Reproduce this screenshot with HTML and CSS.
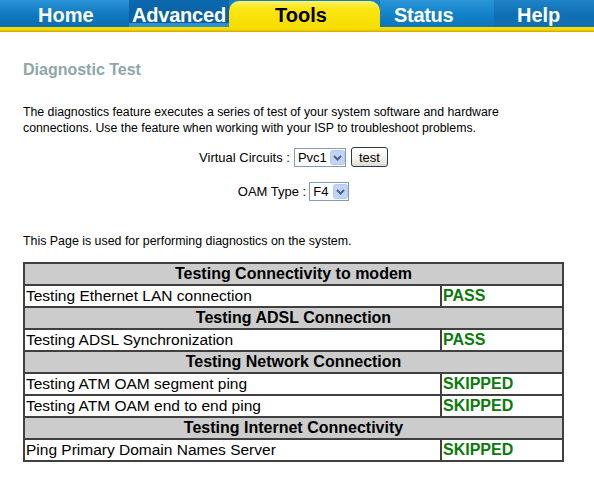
FILE: index.html
```html
<!DOCTYPE html>
<html>
<head>
<meta charset="utf-8">
<title>Diagnostic Test</title>
<link rel="stylesheet" href="styles.css">
</head>
<body>
<div class="nav">
  <div class="tabs">
    <a class="tab home">Home</a>
    <a class="tab adv">Advanced</a>
    <a class="tab tools">Tools</a>
    <a class="tab status">Status</a>
    <a class="tab help">Help</a>
  </div>
  <div class="strip"></div>
</div>
<div class="content">
  <h1 class="title">Diagnostic Test</h1>
  <p class="intro">The diagnostics feature executes a series of test of your system software and hardware connections. Use the feature when working with your ISP to troubleshoot problems.</p>
  <div class="form-row">
    <label class="lbl">Virtual Circuits :</label>
    <span class="select vc">
      <select><option>Pvc1</option></select>
      <svg class="arrow" viewBox="0 0 15 15" width="15" height="15"><rect x="0.5" y="0.5" width="14" height="14" rx="2" fill="#c1d3fb" stroke="#b5c8f2"/><path d="M4 6 L7.5 9.5 L11 6" fill="none" stroke="#4d6185" stroke-width="2"/></svg>
    </span>
    <button class="btn">test</button>
  </div>
  <div class="form-row oam">
    <label class="lbl">OAM Type :</label>
    <span class="select ft">
      <select><option>F4</option></select>
      <svg class="arrow" viewBox="0 0 15 15" width="15" height="15"><rect x="0.5" y="0.5" width="14" height="14" rx="2" fill="#c1d3fb" stroke="#b5c8f2"/><path d="M4 6 L7.5 9.5 L11 6" fill="none" stroke="#4d6185" stroke-width="2"/></svg>
    </span>
  </div>
  <p class="note">This Page is used for performing diagnostics on the system.</p>
  <table class="diag">
    <colgroup><col class="c1"><col class="c2"></colgroup>
    <tr><th colspan="2">Testing Connectivity to modem</th></tr>
    <tr><td>Testing Ethernet LAN connection</td><td class="res">PASS</td></tr>
    <tr><th colspan="2">Testing ADSL Connection</th></tr>
    <tr><td>Testing ADSL Synchronization</td><td class="res">PASS</td></tr>
    <tr><th colspan="2">Testing Network Connection</th></tr>
    <tr><td>Testing ATM OAM segment ping</td><td class="res">SKIPPED</td></tr>
    <tr><td>Testing ATM OAM end to end ping</td><td class="res">SKIPPED</td></tr>
    <tr><th colspan="2">Testing Internet Connectivity</th></tr>
    <tr><td>Ping Primary Domain Names Server</td><td class="res">SKIPPED</td></tr>
  </table>
</div>
</body>
</html>
```
FILE: styles.css
```css
html, body {
  margin: 0;
  padding: 0;
  background: #ffffff;
  font-family: "Liberation Sans", Arial, sans-serif;
  color: #000;
}

.nav {
  display: flex;
  flex-direction: column;
  width: 594px;
}
.tabs {
  display: flex;
  height: 27px;
  background: #1580c6;
}
.tab {
  display: block;
  height: 27px;
  box-sizing: border-box;
  font-family: "Liberation Sans", Arial, sans-serif;
  font-weight: bold;
  font-size: 20px;
  line-height: 30px;
  color: #ffffff;
  white-space: nowrap;
  text-decoration: none;
}
.home {
  width: 129px;
  padding-left: 38px;
  background: linear-gradient(#2a94d6, #0f78bf 55%, #0b6fb4);
}
.adv {
  width: 100px;
  padding-left: 3px;
  background: linear-gradient(#0b68ad, #0a5e9f 85%, #2e8fd0 86%);
  letter-spacing: -0.2px;
}
.tools {
  width: 151px;
  padding-left: 46px;
  color: #000;
  background: linear-gradient(#fff36a, #fbe612 30%, #f6de00);
  border-radius: 10px 10px 0 0;
  margin-top: 1px;
  height: 26px;
  line-height: 29px;
}
.status {
  width: 114px;
  padding-left: 14px;
  background: linear-gradient(#2b96d8, #1181c8 55%, #0c76bd);
  letter-spacing: -0.3px;
}
.help {
  width: 100px;
  padding-left: 23px;
  background: linear-gradient(#1e83c8, #0f6fb4 55%, #136fb3);
}
.strip {
  height: 5px;
  background: linear-gradient(#f8e200, #f1d500 60%, #c9a400);
}

.content {
  margin-left: 23px;
  width: 541px;
}
.title {
  margin: 29px 0 0;
  font-size: 16px;
  line-height: 18px;
  font-weight: bold;
  color: #8ea6a9;
}
.intro {
  margin: 25px 0 0;
  font-size: 12.3px;
  line-height: 16px;
}
.form-row {
  display: flex;
  justify-content: center;
  align-items: center;
  height: 20px;
  margin-top: 11px;
  font-size: 13px;
}
.form-row.oam {
  margin-top: 14px;
}
.lbl {
  margin-right: 4px;
}
.oam .lbl {
  margin-right: 3px;
}
.select {
  position: relative;
  display: inline-block;
  height: 19px;
}
.select select {
  appearance: none;
  -webkit-appearance: none;
  box-sizing: border-box;
  height: 19px;
  margin: 0;
  border: 1px solid #7f9db9;
  border-radius: 0;
  background: #fff;
  font-family: "Liberation Sans", Arial, sans-serif;
  font-size: 13px;
  color: #000;
  padding: 0 0 0 3px;
}
.vc select { width: 52px; }
.ft select { width: 40px; }
.arrow {
  position: absolute;
  right: 1px;
  top: 2px;
  pointer-events: none;
}
.btn {
  box-sizing: border-box;
  width: 37px;
  height: 20px;
  margin-left: 5px;
  padding: 0;
  border: 1px solid #2a3a4a;
  border-radius: 3px;
  background: linear-gradient(#ffffff, #f3f2ec 60%, #dedbcc);
  font-family: "Liberation Sans", Arial, sans-serif;
  font-size: 13px;
  color: #000;
}
.note {
  margin: 32px 0 0;
  font-size: 12.4px;
  line-height: 16px;
}
.diag {
  margin-top: 13px;
  width: 541px;
  border-collapse: separate;
  border-spacing: 0;
  border: 1px solid #404040;
  table-layout: fixed;
}
.c1 { width: 417px; }
.c2 { width: 122px; }
.diag th, .diag td {
  border: 1px solid #404040;
  padding: 0 1px;
  box-sizing: border-box;
  line-height: 18px;
}
.diag th {
  height: 22px;
  background: #cccccc;
  font-size: 16px;
  font-weight: bold;
  text-align: center;
}
.diag td {
  height: 22px;
  font-size: 15.5px;
  text-align: left;
  background: #fff;
}
.diag td.res {
  color: #0a7a0a;
  font-weight: bold;
  font-size: 16px;
}
```
